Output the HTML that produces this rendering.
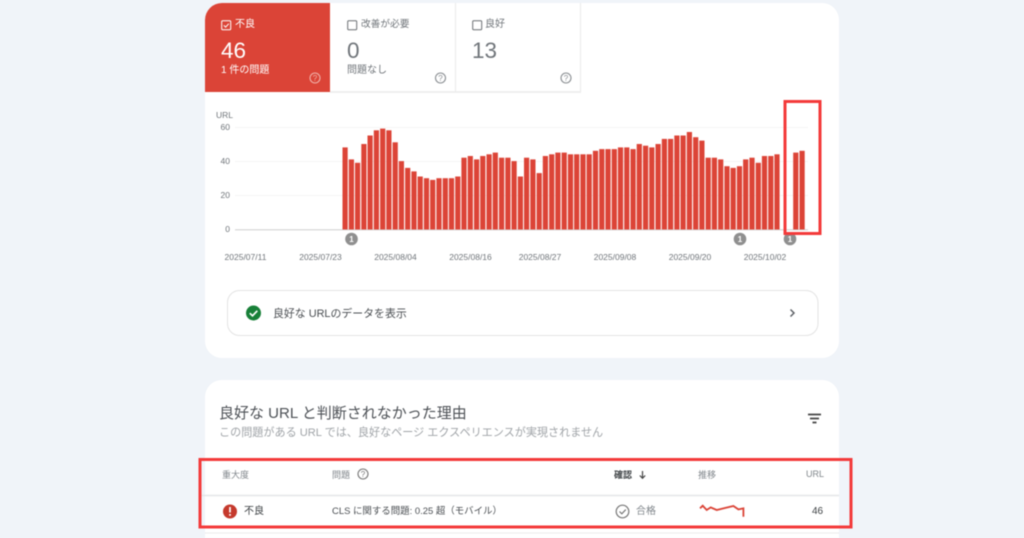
<!DOCTYPE html>
<html lang="ja"><head><meta charset="utf-8">
<style>
html,body{margin:0;padding:0;width:1024px;height:538px;overflow:hidden}
body{background:#f0f4f9;position:relative;font-family:"Liberation Sans","Noto Sans CJK JP",sans-serif;}
.a{position:absolute;white-space:nowrap;line-height:1}
.card{position:absolute;left:205px;width:634px;background:#fff;border-radius:17px}
#clip{position:absolute;left:0;top:0;width:1024px;height:538px;overflow:hidden}
#root{position:absolute;left:0;top:0;width:1024px;height:538px;filter:blur(.45px)}
</style></head><body>
<div id="clip">
<div id="root">
<div class="card" style="top:3px;height:355px"></div>
<div class="card" style="top:380px;height:158px;border-radius:17px 17px 0 0"></div>

<div class="a" style="left:205px;top:3px;width:125px;height:89px;background:#db4437;border-radius:17px 0 0 0"></div>
<div class="a" style="left:330px;top:3px;width:125px;height:88px;border-right:1px solid #eaeaea;border-bottom:2px solid #efefef"></div>
<div class="a" style="left:456px;top:3px;width:124px;height:88px;border-right:1px solid #eaeaea;border-bottom:2px solid #efefef"></div>

<svg class="a" style="left:221px;top:20px" width="11" height="11" viewBox="0 0 11 11"><rect x=".7" y=".7" width="9" height="9" rx="1" fill="none" stroke="#fff" stroke-width="1"/><path d="M2.800 5.300l1.800 1.800 3.200-3.400" fill="none" stroke="#fff" stroke-width="1"/></svg>
<div class="a" style="left:235px;top:20px;font-size:10px;color:#fff">不良</div>
<div class="a" style="left:221px;top:40px;font-size:22.500px;color:#fff">46</div>
<div class="a" style="left:221px;top:66px;font-size:10px;color:#fff">1 件の問題</div>

<svg class="a" style="left:347px;top:20px" width="11" height="11" viewBox="0 0 11 11"><rect x=".7" y=".7" width="9" height="9" rx="1" fill="none" stroke="#6b6f73" stroke-width="1"/></svg>
<div class="a" style="left:361px;top:20px;font-size:9.700px;color:#70757a">改善が必要</div>
<div class="a" style="left:347px;top:40px;font-size:22.500px;color:#70757a">0</div>
<div class="a" style="left:347px;top:66px;font-size:10px;color:#70757a">問題なし</div>

<svg class="a" style="left:472px;top:20px" width="11" height="11" viewBox="0 0 11 11"><rect x=".7" y=".7" width="9" height="9" rx="1" fill="none" stroke="#6b6f73" stroke-width="1"/></svg>
<div class="a" style="left:485px;top:20px;font-size:10px;color:#70757a">良好</div>
<div class="a" style="left:472px;top:40px;font-size:22.500px;color:#70757a">13</div>

<svg class="a" style="left:0;top:0" width="1024" height="538" viewBox="0 0 1024 538">
<g fill="none" stroke-width="1.100">
<circle cx="315" cy="78" r="5" stroke="#f0b0a8"/>
<circle cx="440.500" cy="78" r="5" stroke="#8a8e92"/>
<circle cx="566" cy="78" r="5" stroke="#8a8e92"/>
<circle cx="363" cy="474" r="5" stroke="#777"/>
</g>
<g font-family="Liberation Sans" font-size="8" text-anchor="middle">
<text x="315" y="81" fill="#f0b0a8">?</text>
<text x="440.500" y="81" fill="#8a8e92">?</text>
<text x="566" y="81" fill="#8a8e92">?</text>
<text x="363" y="477" fill="#777">?</text>
</g>
<g stroke="#f5f5f5" stroke-width="1">
<path d="M235 127.500H808M235 161.500H808M235 195.500H808"/>
</g>
<path d="M235 229.800H808" stroke="#d4d4d4" stroke-width="1.200"/>
<g id="bars" fill="#dc4437">
<rect x="342.500" y="147.400" width="5.200" height="82.100"/><rect x="348.800" y="159.400" width="5.200" height="70.100"/><rect x="355" y="162.800" width="5.200" height="66.700"/><rect x="361.300" y="144" width="5.200" height="85.500"/><rect x="367.500" y="135.500" width="5.200" height="94"/><rect x="373.800" y="130.300" width="5.200" height="99.200"/><rect x="380.100" y="128.600" width="5.200" height="100.900"/><rect x="386.300" y="130.300" width="5.200" height="99.200"/><rect x="392.600" y="142.300" width="5.200" height="87.200"/><rect x="398.800" y="161.100" width="5.200" height="68.400"/><rect x="405.100" y="167.900" width="5.200" height="61.600"/><rect x="411.400" y="171.400" width="5.200" height="58.100"/><rect x="417.600" y="176.500" width="5.200" height="53"/><rect x="423.900" y="178.200" width="5.200" height="51.300"/><rect x="430.100" y="179.900" width="5.200" height="49.600"/><rect x="436.400" y="178.200" width="5.200" height="51.300"/><rect x="442.700" y="178.200" width="5.200" height="51.300"/><rect x="448.900" y="178.200" width="5.200" height="51.300"/><rect x="455.200" y="176.500" width="5.200" height="53"/><rect x="461.400" y="157.700" width="5.200" height="71.800"/><rect x="467.700" y="156" width="5.200" height="73.500"/><rect x="474" y="159.400" width="5.200" height="70.100"/><rect x="480.200" y="156" width="5.200" height="73.500"/><rect x="486.500" y="154.300" width="5.200" height="75.200"/><rect x="492.700" y="152.600" width="5.200" height="76.900"/><rect x="499" y="157.700" width="5.200" height="71.800"/><rect x="505.300" y="157.700" width="5.200" height="71.800"/><rect x="511.500" y="161.100" width="5.200" height="68.400"/><rect x="517.800" y="176.500" width="5.200" height="53"/><rect x="524" y="157.700" width="5.200" height="71.800"/><rect x="530.300" y="159.400" width="5.200" height="70.100"/><rect x="536.600" y="173.100" width="5.200" height="56.400"/><rect x="542.800" y="156" width="5.200" height="73.500"/><rect x="549.100" y="154.300" width="5.200" height="75.200"/><rect x="555.300" y="152.600" width="5.200" height="76.900"/><rect x="561.600" y="152.600" width="5.200" height="76.900"/><rect x="567.900" y="154.300" width="5.200" height="75.200"/><rect x="574.100" y="154.300" width="5.200" height="75.200"/><rect x="580.400" y="154.300" width="5.200" height="75.200"/><rect x="586.600" y="154.300" width="5.200" height="75.200"/><rect x="592.900" y="150.800" width="5.200" height="78.700"/><rect x="599.200" y="149.100" width="5.200" height="80.400"/><rect x="605.400" y="149.100" width="5.200" height="80.400"/><rect x="611.700" y="149.100" width="5.200" height="80.400"/><rect x="617.900" y="147.400" width="5.200" height="82.100"/><rect x="624.200" y="147.400" width="5.200" height="82.100"/><rect x="630.500" y="149.100" width="5.200" height="80.400"/><rect x="636.700" y="144" width="5.200" height="85.500"/><rect x="643" y="145.700" width="5.200" height="83.800"/><rect x="649.200" y="147.400" width="5.200" height="82.100"/><rect x="655.500" y="144" width="5.200" height="85.500"/><rect x="661.800" y="138.900" width="5.200" height="90.600"/><rect x="668" y="138.900" width="5.200" height="90.600"/><rect x="674.300" y="135.500" width="5.200" height="94"/><rect x="680.500" y="135.500" width="5.200" height="94"/><rect x="686.800" y="132" width="5.200" height="97.500"/><rect x="693.100" y="137.200" width="5.200" height="92.300"/><rect x="699.300" y="140.600" width="5.200" height="88.900"/><rect x="705.600" y="157.700" width="5.200" height="71.800"/><rect x="711.800" y="157.700" width="5.200" height="71.800"/><rect x="718.100" y="159.400" width="5.200" height="70.100"/><rect x="724.400" y="166.200" width="5.200" height="63.300"/><rect x="730.600" y="167.900" width="5.200" height="61.600"/><rect x="736.900" y="166.200" width="5.200" height="63.300"/><rect x="743.100" y="159.400" width="5.200" height="70.100"/><rect x="749.400" y="157.700" width="5.200" height="71.800"/><rect x="755.700" y="162.800" width="5.200" height="66.700"/><rect x="761.900" y="156" width="5.200" height="73.500"/><rect x="768.200" y="156" width="5.200" height="73.500"/><rect x="774.400" y="154.300" width="5.200" height="75.200"/><rect x="793.200" y="152.600" width="5.200" height="76.900"/><rect x="799.500" y="150.800" width="5.200" height="78.700"/>
</g>
<g fill="#8f8f8f"><circle cx="351.500" cy="239" r="6.300"/><circle cx="740" cy="239" r="6.300"/><circle cx="790" cy="239" r="6.300"/></g>
<g font-family="Liberation Sans" font-size="8" font-weight="bold" text-anchor="middle" fill="#fff"><text x="351.500" y="242">1</text><text x="740" y="242">1</text><text x="790" y="242">1</text></g>
<g font-family="Liberation Sans" font-size="8.500" fill="#70757a">
<text x="216" y="118">URL</text>
<text x="230" y="130" text-anchor="end">60</text><text x="230" y="164" text-anchor="end">40</text><text x="230" y="198" text-anchor="end">20</text><text x="230" y="232" text-anchor="end">0</text>
<text x="245.500" y="260" text-anchor="middle">2025/07/11</text><text x="320.500" y="260" text-anchor="middle">2025/07/23</text><text x="395.500" y="260" text-anchor="middle">2025/08/04</text><text x="470.500" y="260" text-anchor="middle">2025/08/16</text><text x="540" y="260" text-anchor="middle">2025/08/27</text><text x="615" y="260" text-anchor="middle">2025/09/08</text><text x="690" y="260" text-anchor="middle">2025/09/20</text><text x="765" y="260" text-anchor="middle">2025/10/02</text>
</g>
<rect x="227.500" y="290.500" width="590.500" height="45" rx="12" fill="#fff" stroke="#e3e3e3"/>
<circle cx="253.500" cy="313" r="7.500" fill="#188038"/>
<path d="M249.800 313.200l2.700 2.600 4.800-5" fill="none" stroke="#fff" stroke-width="1.700"/>
<path d="M790.500 309.500l3.500 3.500-3.500 3.500" fill="none" stroke="#5f6368" stroke-width="1.500"/>
<path d="M808 414.500h13M810 418.500h9M812.500 422.500h4" stroke="#444" stroke-width="1.800" fill="none"/>
<path d="M200 495.500H839" stroke="#e4e6e8" stroke-width="1.500"/>
<path d="M205 533H839" stroke="#eaeaea" stroke-width="1"/>
<circle cx="230" cy="511.500" r="7" fill="#c5392c"/>
<path d="M230 507v5.500M230 514v1.800" stroke="#fff" stroke-width="1.700"/>
<circle cx="622.500" cy="511.500" r="6.300" fill="none" stroke="#777" stroke-width="1.200"/>
<path d="M619.500 511.500l2.300 2.300 4-4.200" fill="none" stroke="#777" stroke-width="1.200"/>
<path d="M642.500 471v7M639.800 475.500l2.700 2.800 2.700-2.800" fill="none" stroke="#444" stroke-width="1.200"/>
<path d="M700 508.300l2.700-2.600 4 4.300 4-2.600 6 2.600 6.700-1.600 10-2.400 5 3.400 5-1v8.300" fill="none" stroke="#db4437" stroke-width="1.800"/>
<rect x="785" y="101.500" width="35" height="132" fill="none" stroke="#f33a3a" stroke-width="3"/>
<rect x="200" y="459.500" width="651" height="67.500" fill="none" stroke="#f33a3a" stroke-width="3"/>
</svg>

<div class="a" style="left:273px;top:309px;font-size:10.900px;color:#4a4e52">良好な URLのデータを表示</div>
<div class="a" style="left:219px;top:406px;font-size:15px;color:#4d5156">良好な URL と判断されなかった理由</div>
<div class="a" style="left:219px;top:428px;font-size:11.100px;color:#a0a4a8">この問題がある URL では、良好なページ エクスペリエンスが実現されません</div>
<div class="a" style="left:222px;top:471px;font-size:9px;color:#80868b">重大度</div>
<div class="a" style="left:332px;top:471px;font-size:9px;color:#80868b">問題</div>
<div class="a" style="left:614px;top:471px;font-size:9px;color:#3c4043;font-weight:bold">確認</div>
<div class="a" style="left:698px;top:471px;font-size:9px;color:#80868b">推移</div>
<div class="a" style="left:806px;top:470px;font-size:9px;color:#80868b">URL</div>
<div class="a" style="left:244px;top:507px;font-size:10px;color:#3c4043">不良</div>
<div class="a" style="left:332px;top:507px;font-size:9.450px;color:#4a4e52">CLS に関する問題: 0.25 超（モバイル）</div>
<div class="a" style="left:636px;top:507px;font-size:10px;color:#80868b">合格</div>
<div class="a" style="left:812px;top:507px;font-size:10px;color:#3c4043">46</div>
</div>
</div>
</body></html>
